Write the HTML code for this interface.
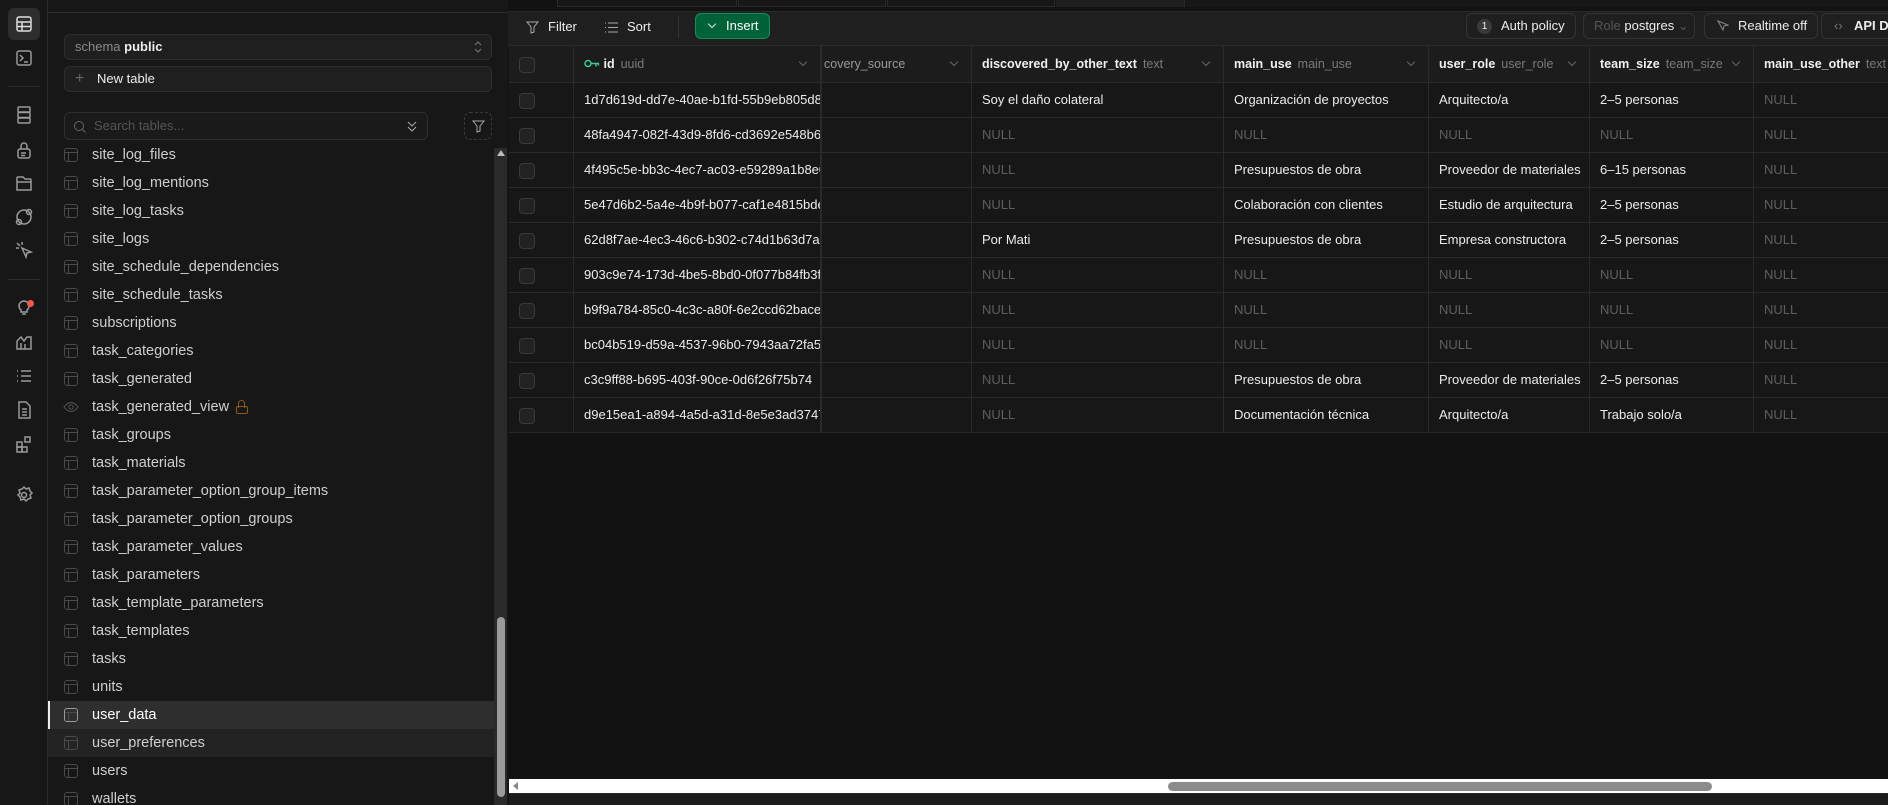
<!DOCTYPE html>
<html><head><meta charset="utf-8"><style>
*{box-sizing:border-box;margin:0;padding:0}
body{width:1888px;height:805px;overflow:hidden;background:#121212;font-family:"Liberation Sans",sans-serif;position:relative;color:#ededed}
.abs{position:absolute}
#bar{left:0;top:0;width:48px;height:805px;background:#171717;border-right:1px solid #2a2a2a}
#bar svg{position:absolute;left:14px;width:20px;height:20px;stroke:#9a9a9a;fill:none;stroke-width:1.5}
#side{left:48px;top:0;width:460px;height:805px;background:#171717}
.box{position:absolute;left:16px;width:428px;border:1px solid #2e2e2e;border-radius:6px;background:#1f1f1f;font-size:13px}
.item{position:absolute;left:0;width:446px;height:28px;font-size:14.5px;color:#cfcfcf;line-height:28px;padding-left:44px}
.item i{position:absolute;left:16px;top:7px;width:14px;height:14px;border:1px solid #4a4a4a;border-radius:3px}
.item i:before{content:"";position:absolute;left:0;right:0;top:3px;border-top:1px solid #4a4a4a}
.item i:after{content:"";position:absolute;left:3px;top:3px;bottom:0;border-left:1px solid #4a4a4a}
#tbl{position:absolute;left:509px;top:46px;width:1379px;overflow:hidden}
.r{display:flex;height:35px}
.r>div{flex:0 0 auto;height:35px;border-right:1px solid #2a2a2a;border-bottom:1px solid #2a2a2a;background:#171717;font-size:13px;line-height:34px;padding-left:10px;white-space:nowrap;overflow:hidden;color:#ededed;position:relative}
.r.h{height:37px}
.r.h>div{background:#1c1c1c;font-size:12.5px;height:37px;line-height:36px}
.r>div:nth-child(1){width:65px}
.r>div:nth-child(2){width:248px;border-right:2px solid #2a2a2a}
.r>div:nth-child(3){width:150px;padding-left:2px}
.r>div:nth-child(4){width:252px}
.r>div:nth-child(5){width:205px}
.r>div:nth-child(6){width:161px}
.r>div:nth-child(7){width:164px}
.r>div:nth-child(8){width:160px}
.r b{color:#f0f0f0}
.r s{text-decoration:none;color:#7a7a7a;margin-left:6px}
.r .n{color:#5e5e5e}
.cb{display:inline-block;width:16px;height:16px;border:1px solid #3a3a3a;border-radius:4px;background:#222;vertical-align:middle}
.chev{position:absolute;right:14px;top:13px;width:6px;height:6px;border-right:1px solid #666;border-bottom:1px solid #666;transform:rotate(45deg)}
.btn{position:absolute;top:13px;height:26px;border:1px solid #333;border-radius:6px;background:#1f1f1f;font-size:13px;line-height:24px;color:#ededed;padding:0 10px;white-space:nowrap}
</style></head><body>
<div id="bar" class="abs">
<div class="abs" style="left:8px;top:8px;width:32px;height:32px;background:#2e2e2e;border-radius:6px"></div>
<svg style="top:14px;stroke:#ddd" viewBox="0 0 20 20"><rect x="3" y="3" width="14" height="14" rx="2"/><path d="M3 8h14M3 12.5h14M8 8v9"/></svg>
<svg style="top:48px" viewBox="0 0 20 20"><rect x="3" y="3" width="14" height="14" rx="2"/><path d="M6 7l3 3-3 3M10 14h4"/></svg>
<div class="abs" style="left:8px;top:86px;width:32px;border-top:1px solid #2e2e2e"></div>
<svg style="top:105px" viewBox="0 0 20 20"><rect x="4" y="2" width="12" height="5" rx="1"/><rect x="4" y="7.5" width="12" height="5" rx="1"/><rect x="4" y="13" width="12" height="5" rx="1"/></svg>
<svg style="top:140px" viewBox="0 0 20 20"><rect x="4" y="9" width="12" height="9" rx="2"/><path d="M7 9V6a3 3 0 016 0v3M7 13h5M7 15.5h4"/></svg>
<svg style="top:173px" viewBox="0 0 20 20"><path d="M3 5a1 1 0 011-1h5l2 2h5a1 1 0 011 1v10H3z M3 9h14"/></svg>
<svg style="top:207px" viewBox="0 0 20 20"><circle cx="10" cy="10" r="7"/><circle cx="15" cy="5" r="2.5"/><circle cx="5" cy="15" r="2.5"/></svg>
<svg style="top:240px" viewBox="0 0 20 20"><path d="M8 8l9 4-4 1-1 4z M3 3l3 3M8 2v3M2 8h3"/></svg>
<div class="abs" style="left:8px;top:279px;width:32px;border-top:1px solid #2e2e2e"></div>
<svg style="top:297px" viewBox="0 0 20 20"><path d="M7 13a5 5 0 116 0v2H7zM8 17h4"/></svg>
<div class="abs" style="left:27px;top:300px;width:7px;height:7px;border-radius:50%;background:#f0584a"></div>
<svg style="top:332px" viewBox="0 0 20 20"><path d="M3 17V9l4-4 3 4 3-4 4 0v12zM7 17v-6M11 17v-5"/></svg>
<svg style="top:366px" viewBox="0 0 20 20"><path d="M7 5h10M7 10h10M7 15h10M3 5h1M3 10h1M3 15h1"/></svg>
<svg style="top:400px" viewBox="0 0 20 20"><path d="M5 2h7l4 4v12H5zM8 9h5M8 12h5M8 15h5"/></svg>
<svg style="top:434px" viewBox="0 0 20 20"><rect x="3" y="8" width="5" height="5"/><rect x="3" y="13" width="5" height="5"/><rect x="8" y="13" width="5" height="5"/><rect x="11" y="3" width="5" height="5"/></svg>
<svg style="top:485px" viewBox="0 0 20 20"><circle cx="10" cy="10" r="2.5"/><path d="M10 2l2 2 3-1 1 3 2 2-2 2 1 3-3 1-2 2-2-2-3 1-1-3-2-2 2-2-1-3 3-1z"/></svg>
</div>
<div id="side" class="abs">
<div class="abs" style="left:0;top:12px;width:460px;border-top:1px solid #2e2e2e"></div>
<div class="box" style="top:34px;height:26px;line-height:24px;padding-left:10px"><span style="color:#8a8a8a">schema</span> <b>public</b><svg style="position:absolute;right:9px;top:6px" width="8" height="12" viewBox="0 0 8 12" fill="none" stroke="#777"><path d="M1 4l3-3 3 3M1 8l3 3 3-3"/></svg></div>
<div class="box" style="top:66px;height:26px;line-height:24px;padding-left:32px;color:#eee"><span style="position:absolute;left:10px;color:#666;font-size:16px">+</span>New table</div>
<div class="box" style="top:112px;width:364px;height:28px;line-height:26px;padding-left:29px;color:#555;background:#1a1a1a">Search tables...<svg style="position:absolute;left:8px;top:7px" width="13" height="13" viewBox="0 0 13 13" fill="none" stroke="#666"><circle cx="6" cy="6" r="4.5"/><path d="M9.5 9.5l3 3"/></svg><svg style="position:absolute;right:10px;top:8px" width="10" height="11" viewBox="0 0 10 11" fill="none" stroke="#aaa"><path d="M1 1l4 4 4-4M1 6l4 4 4-4"/></svg></div>
<div class="abs" style="left:416px;top:112px;width:28px;height:28px;border:1px dashed #3a3a3a;border-radius:6px"><svg style="position:absolute;left:7px;top:7px" width="13" height="13" viewBox="0 0 13 13" fill="none" stroke="#aaa"><path d="M1 1h11L8 6v5L5 12V6z"/></svg></div>
<div class="abs" style="left:0;top:141px;width:446px;height:664px;overflow:hidden">
<div class="item" style="top:0">site_log_files<i></i></div>
<div class="item" style="top:28px">site_log_mentions<i></i></div>
<div class="item" style="top:56px">site_log_tasks<i></i></div>
<div class="item" style="top:84px">site_logs<i></i></div>
<div class="item" style="top:112px">site_schedule_dependencies<i></i></div>
<div class="item" style="top:140px">site_schedule_tasks<i></i></div>
<div class="item" style="top:168px">subscriptions<i></i></div>
<div class="item" style="top:196px">task_categories<i></i></div>
<div class="item" style="top:224px">task_generated<i></i></div>
<div class="item" style="top:252px">task_generated_view<span style="position:absolute;left:188px;top:7px;width:12px;height:14px"><span style="position:absolute;left:0;top:6px;width:12px;height:8px;border:1.5px solid #8a5a18;border-radius:2px"></span><span style="position:absolute;left:2px;top:0;width:7px;height:8px;border:1.5px solid #8a5a18;border-bottom:none;border-radius:4px 4px 0 0"></span></span><svg style="position:absolute;left:15px;top:8px" width="16" height="12" viewBox="0 0 16 12" fill="none" stroke="#555"><path d="M1 6q7-9 14 0q-7 9-14 0z"/><circle cx="8" cy="6" r="2.2"/></svg></div>
<div class="item" style="top:280px">task_groups<i></i></div>
<div class="item" style="top:308px">task_materials<i></i></div>
<div class="item" style="top:336px">task_parameter_option_group_items<i></i></div>
<div class="item" style="top:364px">task_parameter_option_groups<i></i></div>
<div class="item" style="top:392px">task_parameter_values<i></i></div>
<div class="item" style="top:420px">task_parameters<i></i></div>
<div class="item" style="top:448px">task_template_parameters<i></i></div>
<div class="item" style="top:476px">task_templates<i></i></div>
<div class="item" style="top:504px">tasks<i></i></div>
<div class="item" style="top:532px">units<i></i></div>
<div class="item" style="top:560px;background:#2e2e2e;color:#fff;border-left:2px solid #eee;padding-left:42px">user_data<i style="left:14px;border-color:#999"></i></div>
<div class="item" style="top:588px;background:#232323">user_preferences<i></i></div>
<div class="item" style="top:616px">users<i></i></div>
<div class="item" style="top:644px">wallets<i></i></div>
</div>
<div class="abs" style="left:446px;top:148px;width:13px;height:657px;background:#2a2a2a"></div>
<div class="abs" style="left:449px;top:150px;width:0;height:0;border-left:4px solid transparent;border-right:4px solid transparent;border-bottom:6px solid #bbb"></div>
<div class="abs" style="left:449px;top:617px;width:8px;height:180px;background:#9a9a9a;border-radius:4px"></div>
</div>
<div class="abs" style="left:508px;top:0;width:1380px;height:12px;background:#121212;border-bottom:1px solid #2a2a2a"></div>
<div class="abs" style="left:557px;top:0;width:180px;height:7px;background:#171717;border:1px solid #2a2a2a;border-top:none"></div>
<div class="abs" style="left:738px;top:0;width:148px;height:7px;background:#171717;border:1px solid #2a2a2a;border-top:none"></div>
<div class="abs" style="left:887px;top:0;width:168px;height:7px;background:#171717;border:1px solid #2a2a2a;border-top:none"></div>
<div class="abs" style="left:1056px;top:0;width:128px;height:7px;background:#1f1f1f"></div>
<div class="abs" style="left:1184px;top:0;width:704px;height:7px;background:#171717;border-left:1px solid #2a2a2a"></div>
<div class="abs" style="left:508px;top:12px;width:1380px;height:34px;background:#1f1f1f;border-bottom:1px solid #2a2a2a;font-size:13px">
<svg class="abs" style="left:18px;top:9px" width="13" height="13" viewBox="0 0 13 13" fill="none" stroke="#aaa"><path d="M1 1h11L8 6v5L5 12V6z"/></svg>
<span class="abs" style="left:40px;top:7px">Filter</span>
<svg class="abs" style="left:97px;top:10px" width="13" height="11" viewBox="0 0 13 11" stroke="#aaa"><path d="M0 1h1M3 1h10M0 5.5h1M3 5.5h10M0 10h1M3 10h10"/></svg>
<span class="abs" style="left:119px;top:7px">Sort</span>
<div class="abs" style="left:170px;top:4px;height:22px;border-left:1px solid #333"></div>
<div class="abs" style="left:187px;top:1px;width:75px;height:26px;background:#006239;border:1px solid #1b8a5a;border-radius:6px;line-height:24px;padding-left:30px;color:#fff">Insert<span style="position:absolute;left:13px;top:7px;width:6px;height:6px;border-right:1px solid #ddd;border-bottom:1px solid #ddd;transform:rotate(45deg)"></span></div>
</div>
<div class="btn" style="left:1466px;padding-left:34px">Auth policy<span style="position:absolute;left:10px;top:5px;width:15px;height:15px;border-radius:50%;background:#3a3a3a;font-size:10px;line-height:15px;text-align:center">1</span></div>
<div class="btn" style="left:1583px;width:112px"><span style="color:#555">Role</span> postgres <span style="color:#555">⌄</span></div>
<div class="btn" style="left:1704px;padding-left:33px">Realtime off<svg style="position:absolute;left:12px;top:6px" width="12" height="12" viewBox="0 0 12 12" fill="none" stroke="#888"><path d="M1 1l10 4-4 1-1 4z"/></svg></div>
<div class="btn" style="left:1821px;width:100px;padding-left:32px;font-weight:bold">API Docs<span style="position:absolute;left:12px;color:#777;font-weight:normal">‹›</span></div>
<div id="tbl">
<div class="r h"><div><span class="cb"></span></div><div><svg width="16" height="9" viewBox="0 0 16 9" fill="none" stroke="#3ecf8e" stroke-width="1.4"><circle cx="4" cy="4.5" r="3"/><path d="M7 4.5h8M12 4.5v3M14.5 4.5v2"/></svg> <b>id</b><s>uuid</s><span class="chev"></span></div><div style="color:#999">covery_source<span class="chev"></span></div><div><b>discovered_by_other_text</b><s>text</s><span class="chev"></span></div><div><b>main_use</b><s>main_use</s><span class="chev"></span></div><div><b>user_role</b><s>user_role</s><span class="chev"></span></div><div><b>team_size</b><s>team_size</s><span class="chev"></span></div><div><b>main_use_other</b><s>text</s></div></div>
<div class="r"><div><span class="cb"></span></div><div>1d7d619d-dd7e-40ae-b1fd-55b9eb805d8e</div><div></div><div>Soy el daño colateral</div><div>Organización de proyectos</div><div>Arquitecto/a</div><div>2–5 personas</div><div class="n">NULL</div></div>
<div class="r"><div><span class="cb"></span></div><div>48fa4947-082f-43d9-8fd6-cd3692e548b6</div><div></div><div class="n">NULL</div><div class="n">NULL</div><div class="n">NULL</div><div class="n">NULL</div><div class="n">NULL</div></div>
<div class="r"><div><span class="cb"></span></div><div>4f495c5e-bb3c-4ec7-ac03-e59289a1b8e0</div><div></div><div class="n">NULL</div><div>Presupuestos de obra</div><div>Proveedor de materiales</div><div>6–15 personas</div><div class="n">NULL</div></div>
<div class="r"><div><span class="cb"></span></div><div>5e47d6b2-5a4e-4b9f-b077-caf1e4815bde</div><div></div><div class="n">NULL</div><div>Colaboración con clientes</div><div>Estudio de arquitectura</div><div>2–5 personas</div><div class="n">NULL</div></div>
<div class="r"><div><span class="cb"></span></div><div>62d8f7ae-4ec3-46c6-b302-c74d1b63d7a2</div><div></div><div>Por Mati</div><div>Presupuestos de obra</div><div>Empresa constructora</div><div>2–5 personas</div><div class="n">NULL</div></div>
<div class="r"><div><span class="cb"></span></div><div>903c9e74-173d-4be5-8bd0-0f077b84fb3f</div><div></div><div class="n">NULL</div><div class="n">NULL</div><div class="n">NULL</div><div class="n">NULL</div><div class="n">NULL</div></div>
<div class="r"><div><span class="cb"></span></div><div>b9f9a784-85c0-4c3c-a80f-6e2ccd62bace</div><div></div><div class="n">NULL</div><div class="n">NULL</div><div class="n">NULL</div><div class="n">NULL</div><div class="n">NULL</div></div>
<div class="r"><div><span class="cb"></span></div><div>bc04b519-d59a-4537-96b0-7943aa72fa5f</div><div></div><div class="n">NULL</div><div class="n">NULL</div><div class="n">NULL</div><div class="n">NULL</div><div class="n">NULL</div></div>
<div class="r"><div><span class="cb"></span></div><div>c3c9ff88-b695-403f-90ce-0d6f26f75b74</div><div></div><div class="n">NULL</div><div>Presupuestos de obra</div><div>Proveedor de materiales</div><div>2–5 personas</div><div class="n">NULL</div></div>
<div class="r"><div><span class="cb"></span></div><div>d9e15ea1-a894-4a5d-a31d-8e5e3ad37476</div><div></div><div class="n">NULL</div><div>Documentación técnica</div><div>Arquitecto/a</div><div>Trabajo solo/a</div><div class="n">NULL</div></div>
</div>
<div class="abs" style="left:509px;top:779px;width:1379px;height:14px;background:#fff"></div>
<div class="abs" style="left:513px;top:782px;width:0;height:0;border-top:4px solid transparent;border-bottom:4px solid transparent;border-right:5px solid #888"></div>
<div class="abs" style="left:1168px;top:782px;width:544px;height:9px;background:#8c8c8c;border-radius:5px"></div>
<div class="abs" style="left:509px;top:793px;width:1379px;height:12px;background:#1c1c1c;border-top:1px solid #2a2a2a"></div>
</body></html>
